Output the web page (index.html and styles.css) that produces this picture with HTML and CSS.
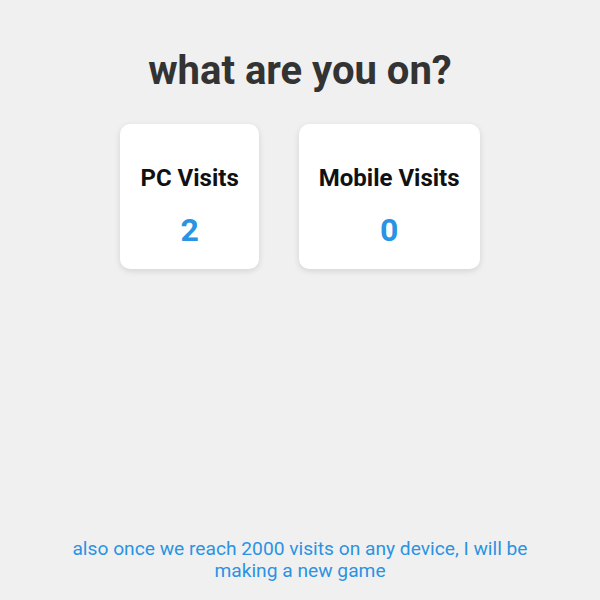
FILE: index.html
```html
<!DOCTYPE html>
<html>
<head>
<meta charset="utf-8">
<link rel="stylesheet" href="styles.css">
</head>
<body>
<div class="page">
  <h1 class="title">what are you on?</h1>
  <div class="cards">
    <div class="card">
      <div class="label">PC Visits</div>
      <div class="count">2</div>
    </div>
    <div class="card">
      <div class="label">Mobile Visits</div>
      <div class="count">0</div>
    </div>
  </div>
  <p class="footer">also once we reach 2000 visits on any device, I will be making a new game</p>
</div>
</body>
</html>
```
FILE: styles.css
```css
html, body {
  margin: 0;
  padding: 0;
  background: #f0f0f0;
  font-family: Roboto, "Liberation Sans", sans-serif;
}
.page {
  min-height: 100vh;
  display: flex;
  flex-direction: column;
  align-items: center;
  box-sizing: border-box;
}
.title {
  margin: 47px 0 0;
  font-size: 40px;
  line-height: 48px;
  font-weight: 700;
  color: #333333;
}
.cards {
  margin-top: 29px;
  display: flex;
  gap: 40px;
}
.card {
  background: #ffffff;
  border-radius: 10px;
  box-shadow: 0 2px 6px rgba(0,0,0,0.12);
  padding: 40px 20px 21px;
  text-align: center;
}
.label {
  font-size: 24px;
  line-height: 28px;
  font-weight: 700;
  color: #111111;
}
.count {
  margin-top: 20px;
  font-size: 32px;
  line-height: 36px;
  font-weight: 700;
  color: #2a93e3;
}
.footer {
  margin: auto 0 18px;
  max-width: 480px;
  text-align: center;
  font-size: 19.2px;
  line-height: 22px;
  color: #2a93e3;
}
```
